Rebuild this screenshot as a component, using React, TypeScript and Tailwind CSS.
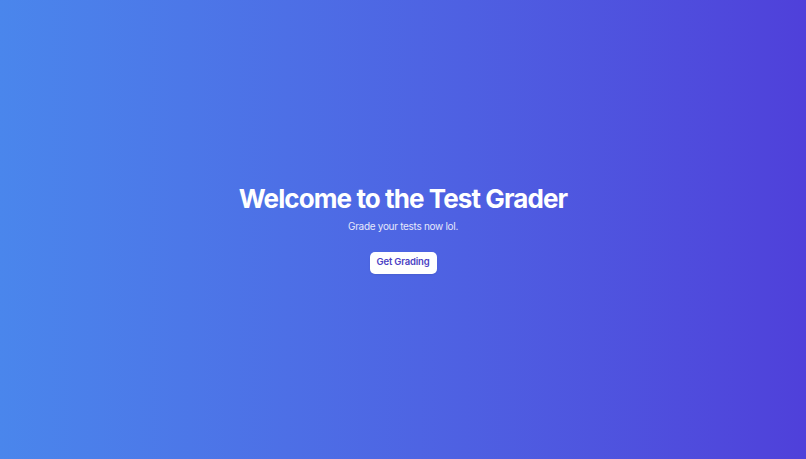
export default function App() {
  return (
    <div
      className="flex min-h-screen w-full flex-col items-center justify-center bg-gradient-to-r from-[#4a86ec] to-[#4f40da] text-center"
      style={{ fontFamily: "Inter, 'Noto Sans', sans-serif" }}
    >
      <h1 className="text-[26px] leading-[26px] font-bold tracking-[-0.035em] text-white">
        Welcome to the Test Grader
      </h1>
      <p className="mt-[7px] text-[10px] leading-[14px] tracking-[-0.03em] text-[#e6e8fb]">
        Grade your tests now lol.
      </p>
      <button
        type="button"
        className="mt-[19px] h-[22px] w-[67px] rounded-[5px] bg-white text-[9.5px] font-semibold tracking-[-0.02em] text-[#4b3fc4] shadow-[0_1px_2px_rgba(0,0,0,0.08)]"
      >
        Get Grading
      </button>
    </div>
  );
}
